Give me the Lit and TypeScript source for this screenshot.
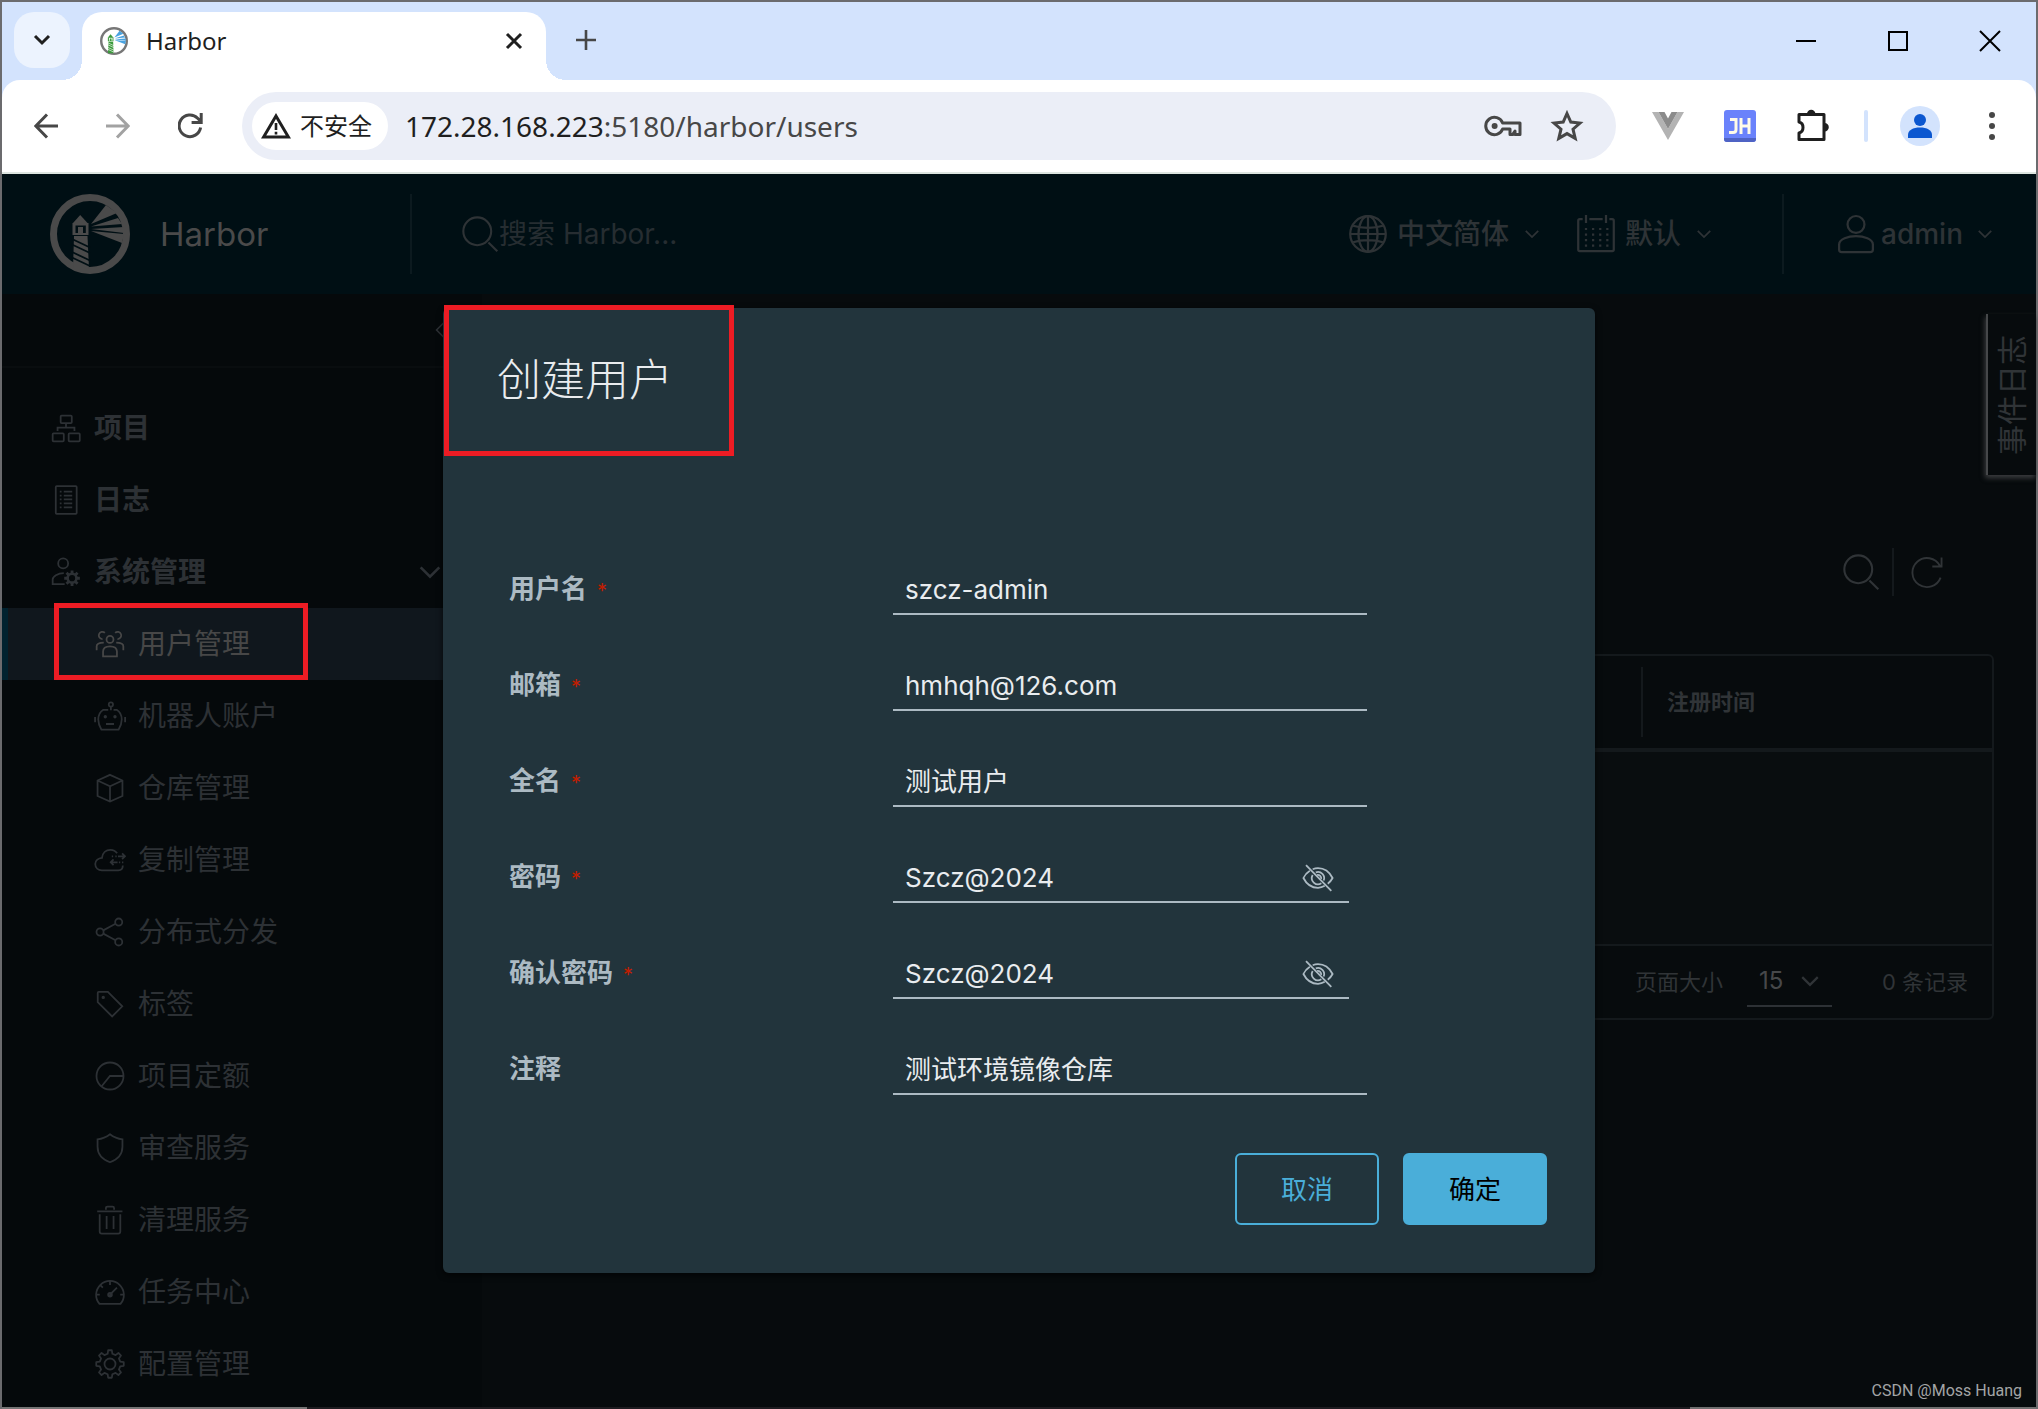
import { LitElement, html, svg, css, nothing } from "lit";
import { customElement, property } from "lit/decorators.js";
import { classMap } from "lit/directives/class-map.js";

/* Outline of a cog wheel with square teeth. */
function gearPath(cx: number, cy: number, outer: number, inner: number, teeth: number): string {
  const step = (Math.PI * 2) / teeth;
  const points: string[] = [];
  for (let i = 0; i < teeth; i++) {
    const a = i * step - Math.PI / 2;
    const corners: [number, number][] = [
      [a - step * 0.29, inner],
      [a - step * 0.17, outer],
      [a + step * 0.17, outer],
      [a + step * 0.29, inner],
    ];
    for (const [angle, r] of corners) {
      points.push(`${(cx + Math.cos(angle) * r).toFixed(2)} ${(cy + Math.sin(angle) * r).toFixed(2)}`);
    }
  }
  return `M${points.join("L")}Z`;
}

const listRows = [8.5, 13, 17.4, 21.8, 26.2];

const glyphs: Record<string, unknown> = {
  organization: svg`<rect x="12" y="4" width="12.5" height="8.5" rx="1"/><rect x="3" y="24" width="12.5" height="9" rx="1"/><rect x="21" y="24" width="12.5" height="9" rx="1"/><path d="M18 12.5V17.5M8.5 21.5V17.5H27.5V21.5"/>`,
  list: svg`<rect x="6.5" y="2.5" width="23.5" height="31" rx="1"/>${listRows.map((y) => svg`<path d="M11 ${y}H13M15.5 ${y}H25"/>`)}`,
  administrator: svg`<circle cx="14.8" cy="8.3" r="5.6"/><path d="M15.5 19.2C8.5 19.2 3 23.6 3 26.4V31.6H16.5"/><circle cx="24.8" cy="25" r="5" stroke-width="3"/><path d="M24.8 16.2V20M24.8 30V33.8M16 25H20M29.6 25H33.6M18.6 18.8L21.4 21.6M28.2 28.4L31 31.2M31 18.8L28.2 21.6M21.4 28.4L18.6 31.2" stroke-width="3.2"/>`,
  group: svg`<circle cx="18" cy="12.8" r="3.9"/><path d="M10.2 31.8V26.5C10.2 22.5 13.8 20.6 18 20.6S25.8 22.5 25.8 26.5V31.8Z"/><path d="M12.2 5.6A4 4 0 1 0 9.6 12.4M23.8 5.6A4 4 0 1 1 26.4 12.4"/><path d="M3 25V20.5C3 17.8 5.5 16.4 11 16.4M33 25V20.5C33 17.8 30.5 16.4 25 16.4"/>`,
  robot: svg`<path d="M16 11H10.5C6.4 13.5 4.8 18 4.8 22S6 29.5 8.4 33.4H27.6C30 29.5 31.2 26 31.2 22S29.6 13.5 25.5 11H22"/><circle cx="19" cy="5" r="2.4"/><path d="M19 7.5V11.5M13.5 27H22.5M1.2 19V25M35 19V25"/><circle cx="12.7" cy="18.8" r=".9"/><circle cx="23.6" cy="18.8" r=".9"/>`,
  box: svg`<path d="M18 3.2L32 9.6V27L18 33.2L4 27V9.6ZM4 9.6L18 16L32 9.6M18 16V33"/>`,
  cloud: svg`<path d="M26 10.5C24 7.6 21.5 6.6 18.5 6.6C13.5 6.6 9.6 10 9 15.6C5 16 1.4 18.4 1.4 22.6C1.4 27 4.8 29.6 8.8 29.6H27.4C30.4 29.6 32.4 27.4 32.4 24.2"/><path d="M20 13.8H21.5M24 13.8H25.5M27 13.8H34.6M31.6 10.6L34.8 13.8L31.6 17M33 20.6H31.5M29.5 20.6H28M26.5 20.6H18.8M22 17.4L18.8 20.6L22 23.8"/>`,
  share: svg`<circle cx="6.8" cy="18" r="4"/><circle cx="27.8" cy="6.8" r="4"/><circle cx="27.8" cy="29.2" r="4"/><path d="M10.4 16.2L24.2 8.8M10.4 19.8L24.2 27.2"/>`,
  tag: svg`<path d="M4.2 5.5Q4.2 4.4 5.3 4.4H15.6L31.8 20.6L20.4 32L4.2 16Z"/><circle cx="10.4" cy="10.6" r=".9"/>`,
  quota: svg`<circle cx="18" cy="18" r="15.2"/><path d="M33.2 18H18L8.6 29.6"/>`,
  shield: svg`<path d="M18 2.6C22 5.8 27 7.8 32 8.2V16.5C32 25.5 26 31 18 34C10 31 4 25.5 4 16.5V8.2C9 7.8 14 5.8 18 2.6Z"/>`,
  trash: svg`<path d="M3.6 8.2H32M13.4 6.5V4.8Q13.4 3 15.2 3H20.8Q22.6 3 22.6 4.8V6.5M6.4 11.6V31Q6.4 33.4 8.8 33.4H27.2Q29.6 33.4 29.6 31V11.6M14.2 13.6V28.2M22 13.6V28.2"/>`,
  dashboard: svg`<path d="M6.2 31.4A15.6 15.6 0 1 1 29.8 31.4Z"/><circle cx="18" cy="21" r="1.8" stroke-width="2.6"/><path d="M18 21L25.8 13.2M18 5.4V10M2.5 21H6.5M29.5 21H33.5M7 10.2L10 13.2"/>`,
  cog: svg`<path d=${gearPath(18, 18, 15.6, 11.8, 8)} stroke-linejoin="round"/><circle cx="18" cy="18" r="6.2"/>`,
  search: svg`<circle cx="15.4" cy="15.4" r="13.2"/><path d="M26 26L34.4 34.4"/>`,
  world: svg`<circle cx="18" cy="18" r="16"/><ellipse cx="18" cy="18" rx="8.6" ry="16"/><path d="M18 2V34M2 18H34M4.6 10.6C12 13 24 13 31.4 10.6M4.6 25.4C12 23 24 23 31.4 25.4"/>`,
  calendar: svg`<path d="M6 4.6H3.4Q2 4.6 2 6V32Q2 33.4 3.4 33.4H32.6Q34 33.4 34 32V6Q34 4.6 32.6 4.6H30M12 4.6H24M9 1V8M27 1V8"/><path d="M8 13.5H30M8 18.5H30M8 23.5H30M8 28.5H30" stroke-dasharray="2 4.4"/>`,
  user: svg`<circle cx="18" cy="9.4" r="7.6"/><path d="M2.8 32V27.5C2.8 22.5 11 20 18 20S33.2 22.5 33.2 27.5V32Q33.2 34.4 30.8 34.4H5.2Q2.8 34.4 2.8 32Z"/>`,
  down: svg`<path d="M4 11L18 25L32 11"/>`,
  left: svg`<path d="M25 4L11 18L25 32"/>`,
  refresh: svg`<path d="M32.4 24A15.4 15.4 0 1 1 31.6 11.4M33.4 2.6V12.2H23.6"/>`,
  eyeOff: svg`<path d="M12 8.2A17 17 0 0 1 18 7C25 7 31 11.5 34.4 18A19 19 0 0 1 29 24.4M25.6 26.8A16 16 0 0 1 18 29C11 29 5 24.8 1.6 18A19 19 0 0 1 8.8 9.8"/><path d="M15.5 11.6A7 7 0 0 1 24.4 20.8M21.8 24A7 7 0 0 1 12 14.6"/><path d="M17 14.5A4 4 0 0 1 21.6 19"/><path d="M4.5 3.5L33 32.5"/>`,
};

const icon = (name: string, cls: string) =>
  html`<svg class="icon ${cls}" viewBox="0 0 36 36" aria-hidden="true">${glyphs[name]}</svg>`;

const lighthouse = (ring: string, tower: string, beam: string, gap: string) => svg`
  <circle cx="40" cy="40" r="36.5" fill="none" stroke=${ring} stroke-width="7"/>
  <g fill=${beam}>
    <path d="M41 30L56 11L67 19Z"/><path d="M41 32.5L68 24L72 30Z"/>
    <path d="M41 35L74 33V39Z"/><path d="M41 37L74 40L72 49Z"/>
  </g>
  <g fill=${tower}>
    <path d="M30.2 21L37.5 29H23Z"/>
    <path d="M22.5 29H38.5V41H22.5ZM25.5 31.5V39H28V33H33V39H35.8V31.5Z" fill-rule="evenodd"/>
    <path d="M24 42H37.5L39 75H23Z"/>
  </g>
  <path d="M22 45L40 53.5M22 50.5L40 59M22 58L40 66.5M22 63.5L40 72" stroke=${gap} stroke-width="1.8" fill="none"/>
`;

interface NavEntry {
  icon: string;
  label: string;
  active?: boolean;
}

const topNav: NavEntry[] = [
  { icon: "organization", label: "项目" },
  { icon: "list", label: "日志" },
];

const adminNav: NavEntry[] = [
  { icon: "group", label: "用户管理", active: true },
  { icon: "robot", label: "机器人账户" },
  { icon: "box", label: "仓库管理" },
  { icon: "cloud", label: "复制管理" },
  { icon: "share", label: "分布式分发" },
  { icon: "tag", label: "标签" },
  { icon: "quota", label: "项目定额" },
  { icon: "shield", label: "审查服务" },
  { icon: "trash", label: "清理服务" },
  { icon: "dashboard", label: "任务中心" },
  { icon: "cog", label: "配置管理" },
];

interface Field {
  id: string;
  label: string;
  value: string;
  required?: boolean;
  secret?: boolean;
}

const fields: Field[] = [
  { id: "username", label: "用户名", value: "szcz-admin", required: true },
  { id: "email", label: "邮箱", value: "hmhqh@126.com", required: true },
  { id: "realname", label: "全名", value: "测试用户", required: true },
  { id: "password", label: "密码", value: "Szcz@2024", required: true, secret: true },
  { id: "confirm", label: "确认密码", value: "Szcz@2024", required: true, secret: true },
  { id: "comment", label: "注释", value: "测试环境镜像仓库" },
];

const shared = css`
  *, *::before, *::after { box-sizing: border-box; }
  button, input, select { font: inherit; color: inherit; margin: 0; padding: 0; border: 0; background: none; outline: none; }
  a { color: inherit; text-decoration: none; }
  svg { display: block; flex: none; }
  .icon { fill: none; stroke: currentColor; stroke-width: 2; }
`;

@customElement("browser-chrome")
export class BrowserChrome extends LitElement {
  static styles = [
    shared,
    css`
      :host {
        display: block;
        background: #d3e3fd;
        color: #1f1f1f;
        font-family: "Noto Sans", "Noto Sans CJK SC", sans-serif;
      }
      .strip { display: flex; height: 78px; padding: 10px 0 0 12px; }
      .tabs-menu {
        width: 56px; height: 56px; border-radius: 20px; background: #ecf3fe;
        display: flex; align-items: center; justify-content: center;
      }
      .tab {
        position: relative; display: flex; align-items: center; width: 464px; height: 68px;
        margin-left: 12px; padding: 0 20px 10px 18px; border-radius: 20px 20px 0 0; background: #fff;
      }
      .tab::before, .tab::after {
        content: ""; position: absolute; bottom: 0; width: 20px; height: 20px;
      }
      .tab::before { left: -20px; background: radial-gradient(circle at 0 0, transparent 20px, #fff 20px); }
      .tab::after { right: -20px; background: radial-gradient(circle at 100% 0, transparent 20px, #fff 20px); }
      .tab-name { flex: 1; padding-left: 18px; font-size: 24px; line-height: 32px; }
      .new-tab { display: flex; width: 80px; height: 56px; align-items: center; justify-content: center; }
      .window-buttons { display: flex; margin-left: auto; }
      .window-buttons button { display: flex; width: 92px; height: 58px; align-items: center; justify-content: center; }
      .toolbar {
        display: flex; align-items: center; height: 92px; padding: 0 24px 0 32px;
        border-radius: 18px 18px 0 0; background: #fff;
      }
      .nav-buttons { display: flex; gap: 48px; margin-right: 38px; color: #474747; }
      .omnibox {
        flex: 1; display: flex; align-items: center; height: 68px; min-width: 0;
        padding: 0 32px 0 10px; border-radius: 34px; background: #ebeef7; color: #474747;
      }
      .chip {
        display: flex; align-items: center; gap: 9px; height: 48px; padding: 0 16px 0 9px;
        border-radius: 24px; background: #fff; color: #1f1f1f; font-size: 24px; line-height: 32px;
      }
      .url { flex: 1; padding-left: 17px; font-size: 28px; line-height: 40px; white-space: nowrap; }
      .url b { font-weight: 400; color: #1f1f1f; }
      .omni-icons { display: flex; align-items: center; gap: 28px; }
      .extensions { display: flex; align-items: center; gap: 32px; margin-left: 32px; }
      .extensions button { display: flex; justify-content: center; width: 40px; }
      .rule { width: 4px; height: 32px; border-radius: 2px; background: #d3e3fd; }
      .edge { height: 2px; background: #dde5e0; }
      .mono { fill: none; stroke: currentColor; stroke-width: 3; }
    `,
  ];

  render() {
    return html`
      <div class="strip">
        <button class="tabs-menu" aria-label="tabs">
          <svg class="mono" width="18" height="12" viewBox="0 0 18 12"><path d="M2 2L9 9L16 2" /></svg>
        </button>
        <div class="tab">
          <svg width="28" height="28" viewBox="0 0 80 80">${lighthouse("#777", "#3c9a3c", "#4aa3e0", "#fff")}</svg>
          <span class="tab-name">Harbor</span>
          <button aria-label="close tab">
            <svg class="mono" width="24" height="18" viewBox="0 0 24 18"><path d="M5 2L19 16M19 2L5 16" /></svg>
          </button>
        </div>
        <button class="new-tab" aria-label="new tab">
          <svg width="22" height="22" viewBox="0 0 22 22"><path d="M11 1V21M1 11H21" stroke="#474747" stroke-width="2.6" /></svg>
        </button>
        <div class="window-buttons">
          <button aria-label="minimize"><svg width="22" height="22" viewBox="0 0 22 22"><path d="M1 11H21" stroke="#000" stroke-width="2" /></svg></button>
          <button aria-label="maximize"><svg width="22" height="22" viewBox="0 0 22 22"><rect x="2" y="2" width="18" height="18" fill="none" stroke="#000" stroke-width="2" /></svg></button>
          <button aria-label="close"><svg width="22" height="22" viewBox="0 0 22 22"><path d="M1 1L21 21M21 1L1 21" stroke="#000" stroke-width="2" /></svg></button>
        </div>
      </div>
      <div class="toolbar">
        <div class="nav-buttons">
          <button aria-label="back"><svg class="mono" width="24" height="26" viewBox="0 0 24 26"><path d="M24 13H2M13 1.5L1.8 13L13 24.5" /></svg></button>
          <button aria-label="forward"><svg class="mono" width="24" height="26" viewBox="0 0 24 26" opacity=".5"><path d="M0 13H22M11 1.5L22.2 13L11 24.5" /></svg></button>
          <button aria-label="reload">
            <svg class="mono" width="26" height="26" viewBox="1 0 26 26"><path d="M23.6 14.5A10.8 10.8 0 1 1 20.6 5.2L23.6 8.2M24.2 0V9.4H14.6" /></svg>
          </button>
        </div>
        <div class="omnibox">
          <button class="chip">
            <svg width="30" height="26" viewBox="0 0 30 26"><path d="M15 3L27.4 24H2.6Z" fill="none" stroke="#1f1f1f" stroke-width="3" /><path d="M15 10V17M15 18.8V21.4" stroke="#1f1f1f" stroke-width="2.6" /></svg>
            不安全
          </button>
          <div class="url"><b>172.28.168.223</b>:5180/harbor/users</div>
          <div class="omni-icons">
            <button aria-label="passwords">
              <svg class="mono" width="38" height="22" viewBox="0 0 38 22"><path d="M18.6 8H36V19.6H31V16L28.6 19.6H26V14H18.6A8.7 8.7 0 1 1 18.6 8Z" stroke-linejoin="round" /><circle cx="10.6" cy="11" r="3" fill="currentColor" stroke="none" /></svg>
            </button>
            <button aria-label="bookmark">
              <svg class="mono" width="34" height="34" viewBox="0 0 34 34"><path d="M17 4.5L20.8 13L30 14L23 20.2L25.2 29.4L17 24.6L8.8 29.4L11 20.2L4 14L13.2 13Z" /></svg>
            </button>
          </div>
        </div>
        <div class="extensions">
          <button aria-label="vue">
            <svg width="32" height="28" viewBox="0 0 32 28"><path d="M0 0H6.5L16 17L25.5 0H32L16 28Z" fill="#b3b3b3" /><path d="M6.5 0H12.5L16 6.5L19.5 0H25.5L16 17Z" fill="#8b8b8b" /></svg>
          </button>
          <button aria-label="JH">
            <svg width="34" height="32" viewBox="0 0 34 32"><rect x="1" width="32" height="32" rx="3" fill="#6a82fb" /><path d="M1 28H33V29Q33 32 30 32H4Q1 32 1 29Z" fill="#4f63c4" /><path d="M7 9.5H13V19.5Q13 22.5 10 22.5H6M18 8V24M26 8V24M18 16H26" fill="none" stroke="#fffbe8" stroke-width="3" /></svg>
          </button>
          <button aria-label="extensions">
            <svg class="mono" width="36" height="34" viewBox="0 0 36 34"><path d="M5 5.5H30V30.5H5V24C7.6 23.4 9 21.4 9 18.5S7.6 13.6 5 13Z" stroke-linejoin="round" /><path d="M13 5A4.2 4.2 0 0 1 21.4 5ZM30.6 14A4.2 4.2 0 0 1 30.6 22.4Z" fill="currentColor" stroke="none" /></svg>
          </button>
          <span class="rule"></span>
          <button aria-label="profile">
            <svg width="40" height="40" viewBox="0 0 40 40"><circle cx="20" cy="20" r="20" fill="#d3e3fd" /><circle cx="20" cy="14" r="6" fill="#0b57d0" /><path d="M8 32V29C8 24 13 21.5 20 21.5S32 24 32 29V32Z" fill="#0b57d0" /></svg>
          </button>
          <button aria-label="menu">
            <svg width="28" height="28" viewBox="0 0 28 28" fill="#474747"><circle cx="14" cy="3" r="3" /><circle cx="14" cy="14" r="3" /><circle cx="14" cy="25" r="3" /></svg>
          </button>
        </div>
      </div>
      <div class="edge"></div>
    `;
  }
}

@customElement("harbor-header")
export class HarborHeader extends LitElement {
  static styles = [
    shared,
    css`
      :host {
        display: flex; align-items: center; height: 120px; background: #000f14; color: #2e3336;
        font-family: Inter, "Noto Sans CJK SC", sans-serif; font-size: 28px; line-height: 40px;
      }
      .brand {
        display: flex; align-items: center; gap: 30px; width: 410px; height: 80px; padding-left: 48px;
        border-right: 2px solid #0c1a1f; color: #4a4a4a; font-size: 33px;
      }
      .search { flex: 1; display: flex; align-items: center; padding-left: 49px; }
      .search input { flex: 1; min-width: 0; }
      .search input::placeholder { color: #262d31; opacity: 1; }
      .menu { display: flex; align-items: center; gap: 15px; font-weight: 500; }
      .menu .word { display: flex; align-items: center; gap: 9px; }
      .theme { margin-left: 36px; margin-right: 70px; }
      .account { gap: 14px; height: 80px; padding: 0 43px 0 52px; border-left: 2px solid #0c1a1f; }
      .account .word { gap: 5px; }
      .i40 { width: 40px; height: 40px; }
      .i38 { width: 38px; height: 38px; }
      .i16 { width: 16px; height: 16px; stroke-width: 4; }
    `,
  ];

  render() {
    return html`
      <a class="brand" href="#harbor">
        <svg width="80" height="80" viewBox="0 0 80 80">${lighthouse("#4a4a4a", "#4a4a4a", "#4a4a4a", "#000f14")}</svg>
        <span>Harbor</span>
      </a>
      <label class="search">
        ${icon("search", "i38")}
        <input type="text" placeholder="搜索 Harbor..." aria-label="搜索 Harbor..." />
      </label>
      <button class="menu language"><span class="word">${icon("world", "i40")}中文简体</span>${icon("down", "i16")}</button>
      <button class="menu theme"><span class="word">${icon("calendar", "i40")}默认</span>${icon("down", "i16")}</button>
      <button class="menu account"><span class="word">${icon("user", "i40")}admin</span>${icon("down", "i16")}</button>
    `;
  }
}

@customElement("harbor-sidebar")
export class HarborSidebar extends LitElement {
  static styles = [
    shared,
    css`
      :host {
        display: block; width: 480px; flex: none; background: #05090b; color: #2d3135;
        font-family: Inter, "Noto Sans CJK SC", sans-serif; font-size: 28px; line-height: 40px;
      }
      .collapse {
        display: flex; justify-content: flex-end; align-items: center; height: 74px;
        padding-right: 26px; border-bottom: 2px solid #090d0f;
      }
      .list { padding-top: 24px; }
      .item { position: relative; display: flex; align-items: center; gap: 12px; height: 72px; padding-left: 48px; }
      .top { font-weight: 700; }
      .sub { padding-left: 92px; }
      .open { margin-left: auto; margin-right: 40px; }
      .active { background: #10171d; color: #474747; }
      .active::before { content: ""; position: absolute; left: 0; top: 0; bottom: 0; width: 6px; background: #00222f; }
      .mark { position: absolute; left: 52px; top: -5px; width: 254px; height: 77px; border: 5px solid #ed1c24; }
      .i32 { width: 32px; height: 32px; }
      .i24 { width: 24px; height: 24px; stroke-width: 4; }
      .i28 { width: 28px; height: 28px; }
    `,
  ];

  private entry(item: NavEntry, sub: boolean) {
    return html`<a href="#${item.icon}" class=${classMap({ item: true, top: !sub, sub, active: !!item.active })}>
      ${icon(item.icon, "i32")}<span>${item.label}</span>${item.active ? html`<i class="mark"></i>` : nothing}
    </a>`;
  }

  render() {
    return html`
      <div class="collapse"><button aria-label="collapse">${icon("left", "i28")}</button></div>
      <nav class="list">
        ${topNav.map((item) => this.entry(item, false))}
        <a href="#admin" class="item top">${icon("administrator", "i32")}<span>系统管理</span><span class="open">${icon("down", "i24")}</span></a>
        ${adminNav.map((item) => this.entry(item, true))}
      </nav>
    `;
  }
}

@customElement("user-list")
export class UserList extends LitElement {
  static styles = [
    shared,
    css`
      :host {
        position: relative; display: block; flex: 1; min-width: 0; padding: 254px 42px 0 48px;
        background: #070b0d; color: #303437;
        font-family: Inter, "Noto Sans CJK SC", sans-serif; font-size: 22px; line-height: 32px;
      }
      .events {
        position: absolute; right: 0; top: 20px; width: 50px; height: 161px;
        display: flex; align-items: center; justify-content: center;
        border-left: 2px solid #46484a; box-shadow: -1px 3px 5px #3b3d3f; background: #070b0d;
        font-size: 30px; line-height: 40px;
      }
      .events span { writing-mode: vertical-rl; text-orientation: sideways; transform: rotate(180deg); white-space: nowrap; }
      .actions { display: flex; justify-content: flex-end; align-items: center; height: 48px; padding-right: 50px; }
      .actions .refresh { margin-left: 12px; padding-left: 16px; height: 48px; border-left: 2px solid #14191c; }
      .grid { margin-top: 58px; border: 2px solid #14191c; border-radius: 6px; }
      table { width: 100%; border-collapse: separate; border-spacing: 0; }
      th { height: 96px; padding: 10px 0; text-align: left; font-weight: 700; border-bottom: 4px solid #14191c; }
      .registered { width: 351px; }
      .registered div { padding-left: 24px; border-left: 2px solid #14191c; line-height: 70px; }
      td { height: 194px; background: #090d0f; border-bottom: 2px solid #14191c; }
      .foot { display: flex; justify-content: flex-end; align-items: center; height: 72px; padding-right: 24px; }
      .size { position: relative; display: flex; align-items: center; gap: 24px; margin-right: 50px; }
      .size select {
        appearance: none; width: 85px; height: 50px; padding: 0 0 0 12px; color: #46484a;
        font-size: 24px; border-bottom: 2px solid #2d3135;
      }
      .size .caret { position: absolute; right: 12px; top: 14px; pointer-events: none; }
      .i38 { width: 38px; height: 38px; }
      .i34 { width: 34px; height: 34px; }
      .i20 { width: 20px; height: 20px; stroke-width: 4; }
    `,
  ];

  render() {
    return html`
      <button class="events"><span>事件日志</span></button>
      <div class="actions">
        <button aria-label="search">${icon("search", "i38")}</button>
        <button class="refresh" aria-label="refresh">${icon("refresh", "i34")}</button>
      </div>
      <div class="grid">
        <table>
          <thead><tr><th></th><th class="registered"><div>注册时间</div></th></tr></thead>
          <tbody><tr><td colspan="2"></td></tr></tbody>
        </table>
        <div class="foot">
          <label class="size">页面大小
            <select><option selected>15</option></select>
            ${icon("down", "i20 caret")}
          </label>
          <span>0 条记录</span>
        </div>
      </div>
    `;
  }
}

@customElement("create-user-dialog")
export class CreateUserDialog extends LitElement {
  @property({ type: Array }) fields: Field[] = fields;

  static styles = [
    shared,
    css`
      :host {
        position: relative; display: block; width: min(1152px, 96%); padding: 48px; border-radius: 6px;
        background: #22343c; box-shadow: 0 2px 6px #000a; color: #e9ecef;
        font-family: Inter, "Noto Sans CJK SC", sans-serif; font-size: 26px; line-height: 40px;
      }
      .mark { position: absolute; left: 1px; top: -3px; width: 290px; height: 151px; border: 5px solid #ed1c24; }
      h3 { margin: 0 0 147px; padding-left: 6px; font-size: 44px; line-height: 48px; font-weight: 300; }
      form { display: flex; flex-direction: column; gap: 16px; }
      .row { display: flex; align-items: flex-start; height: 80px; padding: 16px 0 0 18px; }
      .row label { width: 384px; color: #acbac3; font-weight: 700; line-height: 44px; }
      .star { margin-left: 10px; color: #c21d00; font-size: 20px; font-weight: 400; line-height: 16px; }
      .control { display: flex; width: 474px; height: 48px; padding: 0 12px; border-bottom: 2px solid #acbac3; }
      .control input { flex: 1; min-width: 0; }
      .secret { width: 456px; padding-right: 15px; }
      .control button { color: #acbac3; }
      .foot { display: flex; justify-content: flex-end; gap: 24px; padding-top: 26px; }
      .foot button { width: 144px; height: 72px; padding-top: 2px; border: 2px solid #4aaed9; border-radius: 6px; color: #4aaed9; }
      .foot .ok { background: #4aaed9; color: #000; }
      .i32 { width: 32px; height: 32px; }
    `,
  ];

  render() {
    return html`
      <i class="mark"></i>
      <h3>创建用户</h3>
      <form>
        ${this.fields.map(
          (f) => html`<div class="row">
            <label for=${f.id}>${f.label}${f.required ? html`<span class="star">*</span>` : nothing}</label>
            <div class=${classMap({ control: true, secret: !!f.secret })}>
              <input id=${f.id} type="text" .value=${f.value} />
              ${f.secret ? html`<button type="button" aria-label="hide">${icon("eyeOff", "i32")}</button>` : nothing}
            </div>
          </div>`
        )}
        <div class="foot">
          <button type="button">取消</button>
          <button type="button" class="ok">确定</button>
        </div>
      </form>
    `;
  }
}

@customElement("app-root")
export class AppRoot extends LitElement {
  static styles = [
    shared,
    css`
      :host {
        display: flex; flex-direction: column; min-height: 100vh; box-sizing: border-box;
        border: 2px solid #6b6b6e; border-bottom: 0; background: #070b0d;
      }
      .page { position: relative; flex: 1; display: flex; flex-direction: column; }
      .body { flex: 1; display: flex; }
      .overlay { position: absolute; inset: 0; display: flex; align-items: center; justify-content: center; }
      .credit {
        position: absolute; right: 14px; bottom: 6px; color: #a3a5a6;
        font: 16px/20px Roboto, "Liberation Sans", sans-serif;
      }
      .base { height: 2px; background: linear-gradient(90deg, #757575 15%, #1e1c20 15% 83%, #6f6f6f 83%); }
    `,
  ];

  render() {
    return html`
      <browser-chrome></browser-chrome>
      <div class="page">
        <harbor-header></harbor-header>
        <div class="body">
          <harbor-sidebar></harbor-sidebar>
          <user-list></user-list>
        </div>
        <div class="overlay"><create-user-dialog></create-user-dialog></div>
        <span class="credit">CSDN @Moss Huang</span>
      </div>
      <div class="base"></div>
    `;
  }
}
